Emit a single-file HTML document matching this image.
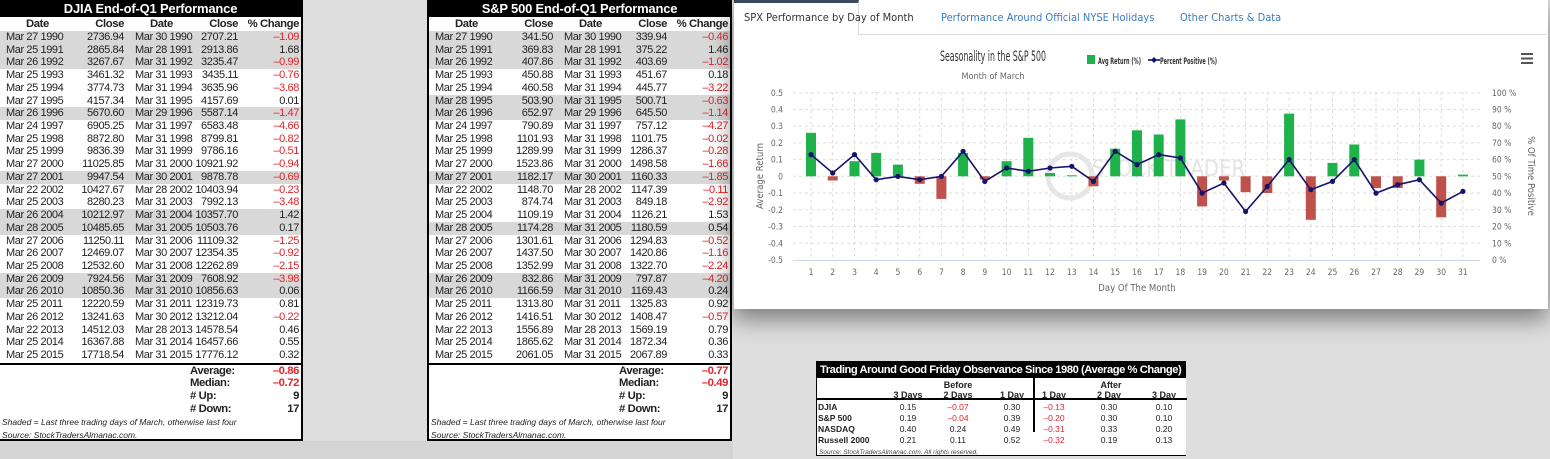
<!DOCTYPE html>
<html><head><meta charset="utf-8"><style>
*{margin:0;padding:0;box-sizing:border-box}
body{width:1550px;height:459px;overflow:hidden;background:#dedede;font-family:"Liberation Sans",Arial,sans-serif;position:relative}
.tbl{position:absolute;top:0;width:305px;height:441px;background:#fff;border:2px solid #000;border-top:0;font-size:11px;letter-spacing:-0.4px;color:#222}
.ttl{height:17px;background:#000;color:#fff;font-weight:bold;font-size:13px;letter-spacing:-0.2px;text-align:center;line-height:17px}
.r{position:relative;height:12.72px;line-height:12.72px;white-space:nowrap}
.r span{position:absolute}
.s{background:#d8d8d8}
.h{font-weight:bold;font-size:11.3px;height:14px;line-height:14px}
.a{left:6px}.b{right:177px}.c{left:135px}.d{right:63px}.e{right:2px}
.n{color:#e0242a}
.sum{border-top:2px solid #000;margin-top:1px}
.sum .r{font-weight:bold;font-size:11.3px}
.lab{left:190px}
.ft{font-style:italic;font-size:8.5px;line-height:13.5px;padding-left:2px;white-space:nowrap;letter-spacing:0}
.panel{position:absolute;left:733px;top:0;width:815px;height:309px;background:#fff;box-shadow:0 10px 22px rgba(0,0,0,.45);border-left:1px solid #bbb}
.tab{position:absolute;top:11px;font-size:11px;color:#3b7dc4;font-family:"DejaVu Sans Condensed","Liberation Sans",sans-serif}
</style></head><body>
<div style="position:absolute;left:0;top:441px;width:733px;height:18px;background:#d4d4d4"></div>

<!-- DJIA -->
<div class="tbl" style="left:-2px">
<div class="ttl">DJIA End-of-Q1 Performance</div>
<div class="r h"><span style="left:26px">Date</span><span class="b">Close</span><span style="left:150px">Date</span><span class="d">Close</span><span class="e">% Change</span></div>
<div class="r s"><span class="a">Mar 27 1990</span><span class="b">2736.94</span><span class="c">Mar 30 1990</span><span class="d">2707.21</span><span class="e n">–1.09</span></div>
<div class="r s"><span class="a">Mar 25 1991</span><span class="b">2865.84</span><span class="c">Mar 28 1991</span><span class="d">2913.86</span><span class="e">1.68</span></div>
<div class="r s"><span class="a">Mar 26 1992</span><span class="b">3267.67</span><span class="c">Mar 31 1992</span><span class="d">3235.47</span><span class="e n">–0.99</span></div>
<div class="r"><span class="a">Mar 25 1993</span><span class="b">3461.32</span><span class="c">Mar 31 1993</span><span class="d">3435.11</span><span class="e n">–0.76</span></div>
<div class="r"><span class="a">Mar 25 1994</span><span class="b">3774.73</span><span class="c">Mar 31 1994</span><span class="d">3635.96</span><span class="e n">–3.68</span></div>
<div class="r"><span class="a">Mar 27 1995</span><span class="b">4157.34</span><span class="c">Mar 31 1995</span><span class="d">4157.69</span><span class="e">0.01</span></div>
<div class="r s"><span class="a">Mar 26 1996</span><span class="b">5670.60</span><span class="c">Mar 29 1996</span><span class="d">5587.14</span><span class="e n">–1.47</span></div>
<div class="r"><span class="a">Mar 24 1997</span><span class="b">6905.25</span><span class="c">Mar 31 1997</span><span class="d">6583.48</span><span class="e n">–4.66</span></div>
<div class="r"><span class="a">Mar 25 1998</span><span class="b">8872.80</span><span class="c">Mar 31 1998</span><span class="d">8799.81</span><span class="e n">–0.82</span></div>
<div class="r"><span class="a">Mar 25 1999</span><span class="b">9836.39</span><span class="c">Mar 31 1999</span><span class="d">9786.16</span><span class="e n">–0.51</span></div>
<div class="r"><span class="a">Mar 27 2000</span><span class="b">11025.85</span><span class="c">Mar 31 2000</span><span class="d">10921.92</span><span class="e n">–0.94</span></div>
<div class="r s"><span class="a">Mar 27 2001</span><span class="b">9947.54</span><span class="c">Mar 30 2001</span><span class="d">9878.78</span><span class="e n">–0.69</span></div>
<div class="r"><span class="a">Mar 22 2002</span><span class="b">10427.67</span><span class="c">Mar 28 2002</span><span class="d">10403.94</span><span class="e n">–0.23</span></div>
<div class="r"><span class="a">Mar 25 2003</span><span class="b">8280.23</span><span class="c">Mar 31 2003</span><span class="d">7992.13</span><span class="e n">–3.48</span></div>
<div class="r s"><span class="a">Mar 26 2004</span><span class="b">10212.97</span><span class="c">Mar 31 2004</span><span class="d">10357.70</span><span class="e">1.42</span></div>
<div class="r s"><span class="a">Mar 28 2005</span><span class="b">10485.65</span><span class="c">Mar 31 2005</span><span class="d">10503.76</span><span class="e">0.17</span></div>
<div class="r"><span class="a">Mar 27 2006</span><span class="b">11250.11</span><span class="c">Mar 31 2006</span><span class="d">11109.32</span><span class="e n">–1.25</span></div>
<div class="r"><span class="a">Mar 26 2007</span><span class="b">12469.07</span><span class="c">Mar 30 2007</span><span class="d">12354.35</span><span class="e n">–0.92</span></div>
<div class="r"><span class="a">Mar 25 2008</span><span class="b">12532.60</span><span class="c">Mar 31 2008</span><span class="d">12262.89</span><span class="e n">–2.15</span></div>
<div class="r s"><span class="a">Mar 26 2009</span><span class="b">7924.56</span><span class="c">Mar 31 2009</span><span class="d">7608.92</span><span class="e n">–3.98</span></div>
<div class="r s"><span class="a">Mar 26 2010</span><span class="b">10850.36</span><span class="c">Mar 31 2010</span><span class="d">10856.63</span><span class="e">0.06</span></div>
<div class="r"><span class="a">Mar 25 2011</span><span class="b">12220.59</span><span class="c">Mar 31 2011</span><span class="d">12319.73</span><span class="e">0.81</span></div>
<div class="r"><span class="a">Mar 26 2012</span><span class="b">13241.63</span><span class="c">Mar 30 2012</span><span class="d">13212.04</span><span class="e n">–0.22</span></div>
<div class="r"><span class="a">Mar 22 2013</span><span class="b">14512.03</span><span class="c">Mar 28 2013</span><span class="d">14578.54</span><span class="e">0.46</span></div>
<div class="r"><span class="a">Mar 25 2014</span><span class="b">16367.88</span><span class="c">Mar 31 2014</span><span class="d">16457.66</span><span class="e">0.55</span></div>
<div class="r"><span class="a">Mar 25 2015</span><span class="b">17718.54</span><span class="c">Mar 31 2015</span><span class="d">17776.12</span><span class="e">0.32</span></div>
<div class="sum">
<div class="r"><span class="lab">Average:</span><span class="e n">–0.86</span></div>
<div class="r"><span class="lab">Median:</span><span class="e n">–0.72</span></div>
<div class="r"><span class="lab"># Up:</span><span class="e">9</span></div>
<div class="r"><span class="lab"># Down:</span><span class="e">17</span></div>
<div class="ft">Shaded = Last three trading days of March, otherwise last four</div>
<div class="ft">Source: StockTradersAlmanac.com.</div>
</div>
</div>

<!-- S&P -->
<div class="tbl" style="left:427px">
<div class="ttl">S&amp;P 500 End-of-Q1 Performance</div>
<div class="r h"><span style="left:26px">Date</span><span class="b">Close</span><span style="left:150px">Date</span><span class="d">Close</span><span class="e">% Change</span></div>
<div class="r s"><span class="a">Mar 27 1990</span><span class="b">341.50</span><span class="c">Mar 30 1990</span><span class="d">339.94</span><span class="e n">–0.46</span></div>
<div class="r s"><span class="a">Mar 25 1991</span><span class="b">369.83</span><span class="c">Mar 28 1991</span><span class="d">375.22</span><span class="e">1.46</span></div>
<div class="r s"><span class="a">Mar 26 1992</span><span class="b">407.86</span><span class="c">Mar 31 1992</span><span class="d">403.69</span><span class="e n">–1.02</span></div>
<div class="r"><span class="a">Mar 25 1993</span><span class="b">450.88</span><span class="c">Mar 31 1993</span><span class="d">451.67</span><span class="e">0.18</span></div>
<div class="r"><span class="a">Mar 25 1994</span><span class="b">460.58</span><span class="c">Mar 31 1994</span><span class="d">445.77</span><span class="e n">–3.22</span></div>
<div class="r s"><span class="a">Mar 28 1995</span><span class="b">503.90</span><span class="c">Mar 31 1995</span><span class="d">500.71</span><span class="e n">–0.63</span></div>
<div class="r s"><span class="a">Mar 26 1996</span><span class="b">652.97</span><span class="c">Mar 29 1996</span><span class="d">645.50</span><span class="e n">–1.14</span></div>
<div class="r"><span class="a">Mar 24 1997</span><span class="b">790.89</span><span class="c">Mar 31 1997</span><span class="d">757.12</span><span class="e n">–4.27</span></div>
<div class="r"><span class="a">Mar 25 1998</span><span class="b">1101.93</span><span class="c">Mar 31 1998</span><span class="d">1101.75</span><span class="e n">–0.02</span></div>
<div class="r"><span class="a">Mar 25 1999</span><span class="b">1289.99</span><span class="c">Mar 31 1999</span><span class="d">1286.37</span><span class="e n">–0.28</span></div>
<div class="r"><span class="a">Mar 27 2000</span><span class="b">1523.86</span><span class="c">Mar 31 2000</span><span class="d">1498.58</span><span class="e n">–1.66</span></div>
<div class="r s"><span class="a">Mar 27 2001</span><span class="b">1182.17</span><span class="c">Mar 30 2001</span><span class="d">1160.33</span><span class="e n">–1.85</span></div>
<div class="r"><span class="a">Mar 22 2002</span><span class="b">1148.70</span><span class="c">Mar 28 2002</span><span class="d">1147.39</span><span class="e n">–0.11</span></div>
<div class="r"><span class="a">Mar 25 2003</span><span class="b">874.74</span><span class="c">Mar 31 2003</span><span class="d">849.18</span><span class="e n">–2.92</span></div>
<div class="r"><span class="a">Mar 25 2004</span><span class="b">1109.19</span><span class="c">Mar 31 2004</span><span class="d">1126.21</span><span class="e">1.53</span></div>
<div class="r s"><span class="a">Mar 28 2005</span><span class="b">1174.28</span><span class="c">Mar 31 2005</span><span class="d">1180.59</span><span class="e">0.54</span></div>
<div class="r"><span class="a">Mar 27 2006</span><span class="b">1301.61</span><span class="c">Mar 31 2006</span><span class="d">1294.83</span><span class="e n">–0.52</span></div>
<div class="r"><span class="a">Mar 26 2007</span><span class="b">1437.50</span><span class="c">Mar 30 2007</span><span class="d">1420.86</span><span class="e n">–1.16</span></div>
<div class="r"><span class="a">Mar 25 2008</span><span class="b">1352.99</span><span class="c">Mar 31 2008</span><span class="d">1322.70</span><span class="e n">–2.24</span></div>
<div class="r s"><span class="a">Mar 26 2009</span><span class="b">832.86</span><span class="c">Mar 31 2009</span><span class="d">797.87</span><span class="e n">–4.20</span></div>
<div class="r s"><span class="a">Mar 26 2010</span><span class="b">1166.59</span><span class="c">Mar 31 2010</span><span class="d">1169.43</span><span class="e">0.24</span></div>
<div class="r"><span class="a">Mar 25 2011</span><span class="b">1313.80</span><span class="c">Mar 31 2011</span><span class="d">1325.83</span><span class="e">0.92</span></div>
<div class="r"><span class="a">Mar 26 2012</span><span class="b">1416.51</span><span class="c">Mar 30 2012</span><span class="d">1408.47</span><span class="e n">–0.57</span></div>
<div class="r"><span class="a">Mar 22 2013</span><span class="b">1556.89</span><span class="c">Mar 28 2013</span><span class="d">1569.19</span><span class="e">0.79</span></div>
<div class="r"><span class="a">Mar 25 2014</span><span class="b">1865.62</span><span class="c">Mar 31 2014</span><span class="d">1872.34</span><span class="e">0.36</span></div>
<div class="r"><span class="a">Mar 25 2015</span><span class="b">2061.05</span><span class="c">Mar 31 2015</span><span class="d">2067.89</span><span class="e">0.33</span></div>
<div class="sum">
<div class="r"><span class="lab">Average:</span><span class="e n">–0.77</span></div>
<div class="r"><span class="lab">Median:</span><span class="e n">–0.49</span></div>
<div class="r"><span class="lab"># Up:</span><span class="e">9</span></div>
<div class="r"><span class="lab"># Down:</span><span class="e">17</span></div>
<div class="ft">Shaded = Last three trading days of March, otherwise last four</div>
<div class="ft">Source: StockTradersAlmanac.com.</div>
</div>
</div>

<!-- chart panel -->
<div class="panel">
<div style="position:absolute;left:0;top:0;width:125px;height:35px;border-top:3px solid #3a4a5c;border-right:1px solid #ddd;background:#fff"></div>
<div style="position:absolute;left:125px;top:34px;width:690px;height:1px;background:#ddd"></div>
<div class="tab" style="left:10px;color:#333">SPX Performance by Day of Month</div>
<div class="tab" style="left:207px">Performance Around Official NYSE Holidays</div>
<div class="tab" style="left:446px">Other Charts &amp; Data</div>
</div>
<svg style="position:absolute;left:0;top:0" width="1550" height="459" font-family="DejaVu Sans Condensed, Liberation Sans, sans-serif">
<g stroke="#ddd" stroke-dasharray="3,3" stroke-width="1">
<line x1="793" x2="1480" y1="92.7" y2="92.7"/><line x1="793" x2="1480" y1="109.4" y2="109.4"/><line x1="793" x2="1480" y1="126.1" y2="126.1"/><line x1="793" x2="1480" y1="142.9" y2="142.9"/><line x1="793" x2="1480" y1="159.6" y2="159.6"/><line x1="793" x2="1480" y1="176.3" y2="176.3"/><line x1="793" x2="1480" y1="193" y2="193"/><line x1="793" x2="1480" y1="209.7" y2="209.7"/><line x1="793" x2="1480" y1="226.5" y2="226.5"/><line x1="793" x2="1480" y1="243.2" y2="243.2"/>
<line x1="811" x2="811" y1="92" y2="260"/><line x1="832.7" x2="832.7" y1="92" y2="260"/><line x1="854.5" x2="854.5" y1="92" y2="260"/><line x1="876.2" x2="876.2" y1="92" y2="260"/><line x1="897.9" x2="897.9" y1="92" y2="260"/><line x1="919.7" x2="919.7" y1="92" y2="260"/><line x1="941.4" x2="941.4" y1="92" y2="260"/><line x1="963.1" x2="963.1" y1="92" y2="260"/><line x1="984.8" x2="984.8" y1="92" y2="260"/><line x1="1006.6" x2="1006.6" y1="92" y2="260"/><line x1="1028.3" x2="1028.3" y1="92" y2="260"/><line x1="1050" x2="1050" y1="92" y2="260"/><line x1="1071.8" x2="1071.8" y1="92" y2="260"/><line x1="1093.5" x2="1093.5" y1="92" y2="260"/><line x1="1115.2" x2="1115.2" y1="92" y2="260"/><line x1="1137" x2="1137" y1="92" y2="260"/><line x1="1158.7" x2="1158.7" y1="92" y2="260"/><line x1="1180.4" x2="1180.4" y1="92" y2="260"/><line x1="1202.1" x2="1202.1" y1="92" y2="260"/><line x1="1223.9" x2="1223.9" y1="92" y2="260"/><line x1="1245.6" x2="1245.6" y1="92" y2="260"/><line x1="1267.3" x2="1267.3" y1="92" y2="260"/><line x1="1289.1" x2="1289.1" y1="92" y2="260"/><line x1="1310.8" x2="1310.8" y1="92" y2="260"/><line x1="1332.5" x2="1332.5" y1="92" y2="260"/><line x1="1354.3" x2="1354.3" y1="92" y2="260"/><line x1="1376" x2="1376" y1="92" y2="260"/><line x1="1397.7" x2="1397.7" y1="92" y2="260"/><line x1="1419.4" x2="1419.4" y1="92" y2="260"/><line x1="1441.2" x2="1441.2" y1="92" y2="260"/><line x1="1462.9" x2="1462.9" y1="92" y2="260"/>
</g>
<line x1="793" x2="1480" y1="260.5" y2="260.5" stroke="#ccd6eb"/>
<circle cx="1070" cy="176" r="22" fill="none" stroke="#e6e6e6" stroke-width="5"/>
<text x="1092" y="176" font-size="22" fill="#e4e4e4">STOCK TRADER</text>
<g fill="#1fb14a">
<rect x="806" y="132.8" width="10" height="43.5"/><rect x="849.5" y="161.2" width="10" height="15.1"/><rect x="871.2" y="152.9" width="10" height="23.4"/><rect x="892.9" y="164.6" width="10" height="11.7"/><rect x="958.1" y="152.9" width="10" height="23.4"/><rect x="1001.6" y="161.2" width="10" height="15.1"/><rect x="1023.3" y="137.8" width="10" height="38.5"/><rect x="1045" y="173" width="10" height="3.3"/><rect x="1066.8" y="175.3" width="10" height="1"/><rect x="1110.2" y="148.7" width="10" height="27.6"/><rect x="1132" y="130.3" width="10" height="46"/><rect x="1153.7" y="134.5" width="10" height="41.8"/><rect x="1175.4" y="119.4" width="10" height="56.9"/><rect x="1284.1" y="113.6" width="10" height="62.7"/><rect x="1327.5" y="162.9" width="10" height="13.4"/><rect x="1349.3" y="144.5" width="10" height="31.8"/><rect x="1414.4" y="159.6" width="10" height="16.7"/><rect x="1457.9" y="174.6" width="10" height="1.7"/>
</g>
<g fill="#c0504a">
<rect x="827.7" y="176.3" width="10" height="4.2"/><rect x="914.7" y="176.3" width="10" height="7.5"/><rect x="936.4" y="176.3" width="10" height="22.6"/><rect x="979.8" y="176.3" width="10" height="3.3"/><rect x="1088.5" y="176.3" width="10" height="10"/><rect x="1197.1" y="176.3" width="10" height="30.1"/><rect x="1218.9" y="176.3" width="10" height="4.2"/><rect x="1240.6" y="176.3" width="10" height="15.9"/><rect x="1262.3" y="176.3" width="10" height="16.7"/><rect x="1305.8" y="176.3" width="10" height="43.5"/><rect x="1371" y="176.3" width="10" height="11.7"/><rect x="1392.7" y="176.3" width="10" height="11.7"/><rect x="1436.2" y="176.3" width="10" height="41"/>
</g>
<polyline fill="none" stroke="#14146b" stroke-width="1.6" points="811,154.6 832.7,173 854.5,154.6 876.2,179.7 897.9,176.4 919.7,179.7 941.4,176.4 963.1,151.3 984.8,181.4 1006.6,168 1028.3,171.3 1050,168 1071.8,166.3 1093.5,181.4 1115.2,151.3 1137,164.6 1158.7,154.6 1180.4,158 1202.1,193.1 1223.9,183 1245.6,211.5 1267.3,186.4 1289.1,159.6 1310.8,189.7 1332.5,181.4 1354.3,159.6 1376,193.1 1397.7,184.7 1419.4,179.7 1441.2,203.1 1462.9,191.4"/>
<g fill="#14146b">
<circle cx="811" cy="154.6" r="2.6"/><circle cx="832.7" cy="173" r="2.6"/><circle cx="854.5" cy="154.6" r="2.6"/><circle cx="876.2" cy="179.7" r="2.6"/><circle cx="897.9" cy="176.4" r="2.6"/><circle cx="919.7" cy="179.7" r="2.6"/><circle cx="941.4" cy="176.4" r="2.6"/><circle cx="963.1" cy="151.3" r="2.6"/><circle cx="984.8" cy="181.4" r="2.6"/><circle cx="1006.6" cy="168" r="2.6"/><circle cx="1028.3" cy="171.3" r="2.6"/><circle cx="1050" cy="168" r="2.6"/><circle cx="1071.8" cy="166.3" r="2.6"/><circle cx="1093.5" cy="181.4" r="2.6"/><circle cx="1115.2" cy="151.3" r="2.6"/><circle cx="1137" cy="164.6" r="2.6"/><circle cx="1158.7" cy="154.6" r="2.6"/><circle cx="1180.4" cy="158" r="2.6"/><circle cx="1202.1" cy="193.1" r="2.6"/><circle cx="1223.9" cy="183" r="2.6"/><circle cx="1245.6" cy="211.5" r="2.6"/><circle cx="1267.3" cy="186.4" r="2.6"/><circle cx="1289.1" cy="159.6" r="2.6"/><circle cx="1310.8" cy="189.7" r="2.6"/><circle cx="1332.5" cy="181.4" r="2.6"/><circle cx="1354.3" cy="159.6" r="2.6"/><circle cx="1376" cy="193.1" r="2.6"/><circle cx="1397.7" cy="184.7" r="2.6"/><circle cx="1419.4" cy="179.7" r="2.6"/><circle cx="1441.2" cy="203.1" r="2.6"/><circle cx="1462.9" cy="191.4" r="2.6"/>
</g>
<g font-size="8.5" fill="#666" text-anchor="end">
<text x="783" y="96">0.5</text><text x="783" y="112.5">0.4</text><text x="783" y="129.2">0.3</text><text x="783" y="146">0.2</text><text x="783" y="162.7">0.1</text><text x="783" y="179.4">0</text><text x="783" y="196">-0.1</text><text x="783" y="212.8">-0.2</text><text x="783" y="229.6">-0.3</text><text x="783" y="246.3">-0.4</text><text x="783" y="263">-0.5</text>
</g>
<g font-size="8.5" fill="#666">
<text x="1492" y="96">100 %</text><text x="1492" y="112.5">90 %</text><text x="1492" y="129.2">80 %</text><text x="1492" y="146">70 %</text><text x="1492" y="162.7">60 %</text><text x="1492" y="179.4">50 %</text><text x="1492" y="196">40 %</text><text x="1492" y="212.8">30 %</text><text x="1492" y="229.6">20 %</text><text x="1492" y="246.3">10 %</text><text x="1492" y="263">0 %</text>
</g>
<g font-size="8.5" fill="#666" text-anchor="middle">
<text x="811" y="275">1</text><text x="832.7" y="275">2</text><text x="854.5" y="275">3</text><text x="876.2" y="275">4</text><text x="897.9" y="275">5</text><text x="919.7" y="275">6</text><text x="941.4" y="275">7</text><text x="963.1" y="275">8</text><text x="984.8" y="275">9</text><text x="1006.6" y="275">10</text><text x="1028.3" y="275">11</text><text x="1050" y="275">12</text><text x="1071.8" y="275">13</text><text x="1093.5" y="275">14</text><text x="1115.2" y="275">15</text><text x="1137" y="275">16</text><text x="1158.7" y="275">17</text><text x="1180.4" y="275">18</text><text x="1202.1" y="275">19</text><text x="1223.9" y="275">20</text><text x="1245.6" y="275">21</text><text x="1267.3" y="275">22</text><text x="1289.1" y="275">23</text><text x="1310.8" y="275">24</text><text x="1332.5" y="275">25</text><text x="1354.3" y="275">26</text><text x="1376" y="275">27</text><text x="1397.7" y="275">28</text><text x="1419.4" y="275">29</text><text x="1441.2" y="275">30</text><text x="1462.9" y="275">31</text>
<text x="1137" y="291" font-size="9.5">Day Of The Month</text>
<text x="0" y="0" font-size="9.5" transform="translate(763,176) rotate(-90)">Average Return</text>
<text x="0" y="0" font-size="9.5" transform="translate(1528,176) rotate(90)">% Of Time Positive</text>
<text x="993" y="61" font-size="14.5" fill="#333" textLength="106" lengthAdjust="spacingAndGlyphs">Seasonality in the S&amp;P 500</text>
<text x="993" y="79" font-size="9">Month of March</text>
</g>
<rect x="1087" y="55" width="8" height="9" fill="#1fb14a"/>
<text x="1098" y="64" font-size="9" font-weight="bold" fill="#333" textLength="43" lengthAdjust="spacingAndGlyphs">Avg Return (%)</text>
<line x1="1148" x2="1160" y1="60" y2="60" stroke="#14146b" stroke-width="1.6"/>
<path d="M1154 57 L1157 60 L1154 63 L1151 60Z" fill="#14146b"/>
<text x="1160" y="64" font-size="9" font-weight="bold" fill="#333" textLength="57" lengthAdjust="spacingAndGlyphs">Percent Positive (%)</text>
<g stroke="#555" stroke-width="2"><line x1="1521" x2="1533" y1="54" y2="54"/><line x1="1521" x2="1533" y1="58.5" y2="58.5"/><line x1="1521" x2="1533" y1="63" y2="63"/></g>
</svg>

<!-- Good Friday table -->
<div style="position:absolute;left:816px;top:361px;width:370px;height:95px;background:#fff;border:1.5px solid #000;border-right:0;font-size:8.5px;color:#222">
<div style="height:16px;background:#000;color:#fff;font-weight:bold;font-size:11.2px;letter-spacing:-0.45px;line-height:16px;padding-left:3px;white-space:nowrap;overflow:hidden">Trading Around Good Friday Observance Since 1980 (Average % Change)</div>
<div style="position:absolute;left:216px;top:16px;width:1.5px;height:54px;background:#000"></div>
<div style="position:absolute;left:0;top:36px;width:370px;height:1.5px;background:#000"></div>
<svg width="370" height="78" style="position:absolute;left:0;top:16px" font-family="Liberation Sans, Arial, sans-serif" font-size="8.5" fill="#222">
<g font-weight="bold" text-anchor="middle" font-size="9">
<text x="141" y="10">Before</text><text x="294" y="10">After</text>
<text x="91" y="20">3 Days</text><text x="141" y="20">2 Days</text><text x="195" y="20">1 Day</text><text x="237" y="20">1 Day</text><text x="292" y="20">2 Day</text><text x="347" y="20">3 Day</text>
</g>
<g font-weight="bold"><text x="1" y="32">DJIA</text><text x="1" y="43">S&amp;P 500</text><text x="1" y="54">NASDAQ</text><text x="1" y="65">Russell 2000</text></g>
<g text-anchor="middle">
<text x="91" y="32">0.15</text><text x="141" y="32" fill="#e0242a">–0.07</text><text x="195" y="32">0.30</text><text x="237" y="32" fill="#e0242a">–0.13</text><text x="292" y="32">0.30</text><text x="347" y="32">0.10</text>
<text x="91" y="43">0.19</text><text x="141" y="43" fill="#e0242a">–0.04</text><text x="195" y="43">0.39</text><text x="237" y="43" fill="#e0242a">–0.20</text><text x="292" y="43">0.30</text><text x="347" y="43">0.10</text>
<text x="91" y="54">0.40</text><text x="141" y="54">0.24</text><text x="195" y="54">0.49</text><text x="237" y="54" fill="#e0242a">–0.31</text><text x="292" y="54">0.33</text><text x="347" y="54">0.20</text>
<text x="91" y="65">0.21</text><text x="141" y="65">0.11</text><text x="195" y="65">0.52</text><text x="237" y="65" fill="#e0242a">–0.32</text><text x="292" y="65">0.19</text><text x="347" y="65">0.13</text>
</g>
<text x="2" y="76" font-size="6.5" font-style="italic" fill="#444">Source: StockTradersAlmanac.com. All rights reserved.</text>
</svg>
</div>
</body></html>
